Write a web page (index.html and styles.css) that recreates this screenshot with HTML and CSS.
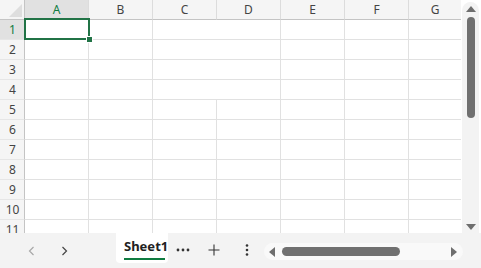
FILE: index.html
```html
<!doctype html>
<html lang="en">
<head>
<meta charset="utf-8">
<title>Workbook</title>
<link rel="stylesheet" href="styles.css">
</head>
<body>

<div class="app">
	<div class="main">
		<div class="sheet">
			<div class="grid">
				<div class="hd corner"></div>
				<div class="hd col sel">A</div>
				<div class="hd col">B</div>
				<div class="hd col">C</div>
				<div class="hd col">D</div>
				<div class="hd col">E</div>
				<div class="hd col">F</div>
				<div class="hd col last">G</div>

				<div class="hd row sel">1</div>
				<div class="c"></div><div class="c"></div><div class="c wide"></div><div class="c"></div><div class="c"></div><div class="c last"></div>
				<div class="hd row">2</div>
				<div class="c"></div><div class="c"></div><div class="c wide"></div><div class="c"></div><div class="c"></div><div class="c last"></div>
				<div class="hd row">3</div>
				<div class="c"></div><div class="c"></div><div class="c wide"></div><div class="c"></div><div class="c"></div><div class="c last"></div>
				<div class="hd row">4</div>
				<div class="c"></div><div class="c"></div><div class="c wide"></div><div class="c"></div><div class="c"></div><div class="c last"></div>
				<div class="hd row">5</div>
				<div class="c"></div><div class="c"></div><div class="c"></div><div class="c"></div><div class="c"></div><div class="c"></div><div class="c last"></div>
				<div class="hd row">6</div>
				<div class="c"></div><div class="c"></div><div class="c"></div><div class="c"></div><div class="c"></div><div class="c"></div><div class="c last"></div>
				<div class="hd row">7</div>
				<div class="c"></div><div class="c"></div><div class="c"></div><div class="c"></div><div class="c"></div><div class="c"></div><div class="c last"></div>
				<div class="hd row">8</div>
				<div class="c"></div><div class="c"></div><div class="c"></div><div class="c"></div><div class="c"></div><div class="c"></div><div class="c last"></div>
				<div class="hd row">9</div>
				<div class="c"></div><div class="c"></div><div class="c"></div><div class="c"></div><div class="c"></div><div class="c"></div><div class="c last"></div>
				<div class="hd row">10</div>
				<div class="c"></div><div class="c"></div><div class="c"></div><div class="c"></div><div class="c"></div><div class="c"></div><div class="c last"></div>
				<div class="hd row">11</div>
				<div class="c"></div><div class="c"></div><div class="c"></div><div class="c"></div><div class="c"></div><div class="c"></div><div class="c last"></div>
			</div>
			<div class="selection"><span class="handle"></span></div>
		</div>

		<div class="vscroll">
			<div class="vtrack">
				<span class="arrow up"></span>
				<span class="vthumb"></span>
				<span class="vspace"></span>
				<span class="arrow down"></span>
			</div>
		</div>
	</div>

	<div class="bar">
		<div class="nav">
			<svg width="12" height="12" viewBox="0 0 12 12"><path d="M7.5 2 L3.5 6 L7.5 10" fill="none" stroke="#a8a8a8" stroke-width="1.2"/></svg>
			<svg width="12" height="12" viewBox="0 0 12 12"><path d="M4.5 2 L8.5 6 L4.5 10" fill="none" stroke="#444" stroke-width="1.2"/></svg>
		</div>
		<div class="tab">Sheet1</div>
		<div class="tool more">
			<svg width="14" height="4" viewBox="0 0 14 4"><circle cx="2" cy="2" r="1.4" fill="#333"/><circle cx="7" cy="2" r="1.4" fill="#333"/><circle cx="12" cy="2" r="1.4" fill="#333"/></svg>
		</div>
		<div class="tool add">
			<svg width="12" height="12" viewBox="0 0 12 12"><path d="M6 0.5 V11.5 M0.5 6 H11.5" stroke="#333" stroke-width="1.1"/></svg>
		</div>
		<div class="tool kebab">
			<svg width="4" height="12" viewBox="0 0 4 12"><circle cx="2" cy="1.5" r="1.3" fill="#333"/><circle cx="2" cy="6" r="1.3" fill="#333"/><circle cx="2" cy="10.5" r="1.3" fill="#333"/></svg>
		</div>
		<div class="hscroll">
			<span class="arrow left"></span>
			<span class="hthumb"></span>
			<span class="hspace"></span>
			<span class="arrow right"></span>
		</div>
	</div>
</div>

</body>
</html>
```

FILE: styles.css
```css
html, body {
	margin: 0;
	padding: 0;
	background: #fff;
}

.app {
	width: 481px;
	height: 268px;
	display: flex;
	flex-direction: column;
	overflow: hidden;
	font-family: "Noto Sans", "Open Sans", sans-serif;
}

.main {
	display: flex;
	height: 233px;
	overflow: hidden;
}

.sheet {
	position: relative;
	width: 461px;
	overflow: hidden;
}

.grid {
	display: grid;
	grid-template-columns: 25px repeat(6, 64px) 52px;
	grid-auto-rows: 20px;
}

.hd {
	box-sizing: border-box;
	background: #f5f5f5;
	color: #444;
	font-size: 12px;
	display: flex;
	align-items: center;
	justify-content: center;
}

.hd.col {
	border-right: 1px solid #dcdcdc;
	border-bottom: 1px solid #c4c4c4;
}
.hd.col.last {
	border-right: 0;
}

.hd.row {
	border-right: 1px solid #c4c4c4;
	border-bottom: 1px solid #e6e6e6;
	padding-left: 1px;
}

.hd.sel {
	background: #e1e1e1;
	color: #107c41;
}

.corner {
	position: relative;
	border-right: 1px solid #c4c4c4;
	border-bottom: 1px solid #c4c4c4;
}
.corner::after {
	content: "";
	position: absolute;
	right: 2px;
	bottom: 2px;
	border-left: 13px solid transparent;
	border-bottom: 13px solid #dedede;
}

.c {
	box-sizing: border-box;
	border-right: 1px solid #e1e1e1;
	border-bottom: 1px solid #e1e1e1;
}
.c.last {
	border-right: 0;
}

.wide {
	grid-column: span 2;
}

.selection {
	position: absolute;
	left: 24px;
	top: 18px;
	width: 66px;
	height: 22px;
	box-sizing: border-box;
	border: 2px solid #217346;
}
.handle {
	position: absolute;
	right: -5px;
	bottom: -5px;
	width: 5px;
	height: 5px;
	background: #217346;
	border: 1px solid #fff;
}

.vscroll {
	width: 20px;
	padding: 2px 2px 0 1px;
	box-sizing: border-box;
}
.vtrack {
	height: 240px;
	background: #f3f3f3;
	border-radius: 9px;
	display: flex;
	flex-direction: column;
	align-items: center;
	padding-top: 4px;
	box-sizing: border-box;
}
.vthumb {
	width: 8px;
	height: 101px;
	margin-top: 5px;
	background: #707070;
	border-radius: 4px;
}
.vspace {
	flex: 1;
}
.arrow {
	width: 0;
	height: 0;
}
.arrow.up {
	border-left: 5px solid transparent;
	border-right: 5px solid transparent;
	border-bottom: 6px solid #6e6e6e;
}
.arrow.down {
	margin-bottom: 12px;
	border-left: 5px solid transparent;
	border-right: 5px solid transparent;
	border-top: 6px solid #6e6e6e;
}

.bar {
	flex: 1;
	display: flex;
	align-items: flex-start;
	background: #f3f3f3;
}

.nav {
	display: flex;
	gap: 20px;
	padding: 12px 0 0 26px;
	width: 116px;
	box-sizing: border-box;
}

.tab {
	box-sizing: border-box;
	width: 52px;
	height: 30px;
	background: #fff;
	border-radius: 0 0 4px 4px;
	font-size: 13px;
	font-weight: bold;
	color: #222;
	padding: 4px 0 0 8px;
	position: relative;
	white-space: nowrap;
}
.tab::after {
	content: "";
	position: absolute;
	left: 8px;
	right: 3px;
	bottom: 3px;
	height: 2px;
	background: #107c41;
}

.tool {
	display: flex;
	align-items: center;
	justify-content: center;
	height: 35px;
	margin-top: -1px;
}
.more {
	width: 30px;
}
.add {
	width: 32px;
}
.kebab {
	width: 34px;
}

.hscroll {
	margin-top: 10px;
	width: 199px;
	height: 17px;
	background: #f9f9f9;
	border-radius: 9px;
	display: flex;
	align-items: center;
	padding: 0 5px;
	box-sizing: border-box;
}
.hthumb {
	width: 118px;
	height: 9px;
	margin-left: 7px;
	background: #707070;
	border-radius: 5px;
}
.hspace {
	flex: 1;
}
.arrow.left {
	border-top: 5px solid transparent;
	border-bottom: 5px solid transparent;
	border-right: 6px solid #6e6e6e;
}
.arrow.right {
	margin-right: 1px;
	border-top: 5px solid transparent;
	border-bottom: 5px solid transparent;
	border-left: 6px solid #6e6e6e;
}
```
